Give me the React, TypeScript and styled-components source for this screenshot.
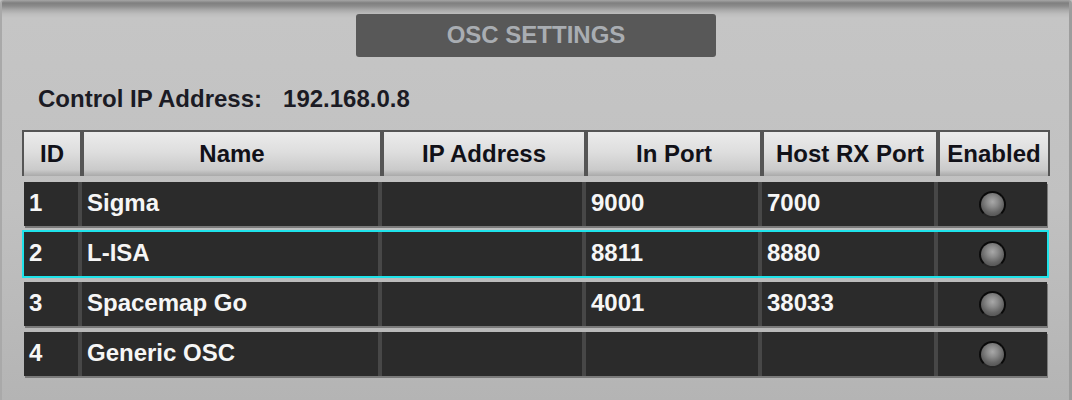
import React from "react";
import styled, { createGlobalStyle } from "styled-components";

const GlobalStyle = createGlobalStyle`
  html, body { margin: 0; padding: 0; background: #c0c0c0; }
  body { font-family: "Liberation Sans", Arial, sans-serif; }
`;

const COLS = "54px 296px 200px 172px 172px 1fr";

const Panel = styled.div`
  box-sizing: border-box;
  width: 1072px;
  height: 400px;
  display: flex;
  flex-direction: column;
  padding: 14px 19px 0 20px;
  border-left: 2px solid #a9a9a9;
  border-right: 3px solid #9d9d9d;
  border-top-left-radius: 4px;
  border-top-right-radius: 4px;
  background: linear-gradient(
    to bottom,
    #a6a6a6 0px,
    #7f7f7f 3px,
    #8b8b8b 6px,
    #a9a9a9 10px,
    #bdbdbd 14px,
    #c5c5c5 18px,
    #c1c1c1 50%,
    #b4b4b4 100%
  );
  font-family: "Liberation Sans", Arial, sans-serif;
  font-weight: bold;
  font-size: 24px;
`;

const TitleBar = styled.div`
  align-self: center;
  width: 360px;
  height: 43px;
  border-radius: 3px;
  background: #585858;
  color: #a9adb2;
  display: flex;
  align-items: center;
  justify-content: center;
  line-height: 28px;
  padding-bottom: 1px;
  box-sizing: border-box;
`;

const InfoRow = styled.div`
  margin-top: 28px;
  margin-left: 16px;
  display: flex;
  gap: 21px;
  line-height: 28px;
  color: #1b1b24;
`;

const Table = styled.div`
  margin-top: 17px;
  width: 1028px;
  display: flex;
  flex-direction: column;
`;

const HeaderRow = styled.div`
  display: grid;
  grid-template-columns: 56px 296px 200px 172px 172px 1fr;
  column-gap: 4px;
  background: #555555;
  border: 2px solid #555555;
  border-bottom: none;
  height: 46px;
  box-sizing: border-box;
`;

const HeaderCell = styled.div`
  background: linear-gradient(
    to bottom,
    #ebebeb 0%,
    #dedede 45%,
    #cacaca 86%,
    #a9a9a9 100%
  );
  color: #111118;
  text-align: center;
  line-height: 44px;
  white-space: nowrap;
`;

const Rows = styled.div`
  margin-top: 6px;
  margin-left: 2px;
  width: 1023px;
  display: flex;
  flex-direction: column;
  gap: 6px;
`;

const Row = styled.div<{ $selected?: boolean }>`
  display: grid;
  grid-template-columns: ${COLS};
  column-gap: 4px;
  height: 44px;
  background: #474747;
  box-shadow: 1px 2px 0 #7a7a7a;
  outline: ${(p) => (p.$selected ? "2px solid #1fe3ea" : "none")};
`;

const Cell = styled.div`
  background: #2b2b2b;
  color: #f6f6f6;
  display: flex;
  align-items: center;
  padding: 0 0 3px 5px;
  white-space: nowrap;
`;

const LedCell = styled(Cell)`
  justify-content: center;
  padding: 0 1px 0 0;
`;

const Led = styled.div`
  width: 27px;
  height: 27px;
  border-radius: 50%;
  box-sizing: border-box;
  border: 2px solid #0a0a0a;
  border-bottom-color: #262626;
  background: radial-gradient(
    circle at 50% 38%,
    #a8a8a8 0%,
    #8a8a8a 30%,
    #656565 60%,
    #454545 100%
  );
`;

type Entry = {
  id: number;
  name: string;
  ip: string;
  inPort: string;
  hostPort: string;
  selected?: boolean;
};

const entries: Entry[] = [
  { id: 1, name: "Sigma", ip: "", inPort: "9000", hostPort: "7000" },
  { id: 2, name: "L-ISA", ip: "", inPort: "8811", hostPort: "8880", selected: true },
  { id: 3, name: "Spacemap Go", ip: "", inPort: "4001", hostPort: "38033" },
  { id: 4, name: "Generic OSC", ip: "", inPort: "", hostPort: "" },
];

const headers = ["ID", "Name", "IP Address", "In Port", "Host RX Port", "Enabled"];

export default function App() {
  return (
    <>
      <GlobalStyle />
      <Panel>
        <TitleBar>OSC SETTINGS</TitleBar>
        <InfoRow>
          <span>Control IP Address:</span>
          <span>192.168.0.8</span>
        </InfoRow>
        <Table>
          <HeaderRow>
            {headers.map((h) => (
              <HeaderCell key={h}>{h}</HeaderCell>
            ))}
          </HeaderRow>
          <Rows>
            {entries.map((e) => (
              <Row key={e.id} $selected={e.selected}>
                <Cell>{e.id}</Cell>
                <Cell>{e.name}</Cell>
                <Cell>{e.ip}</Cell>
                <Cell>{e.inPort}</Cell>
                <Cell>{e.hostPort}</Cell>
                <LedCell>
                  <Led />
                </LedCell>
              </Row>
            ))}
          </Rows>
        </Table>
      </Panel>
    </>
  );
}
